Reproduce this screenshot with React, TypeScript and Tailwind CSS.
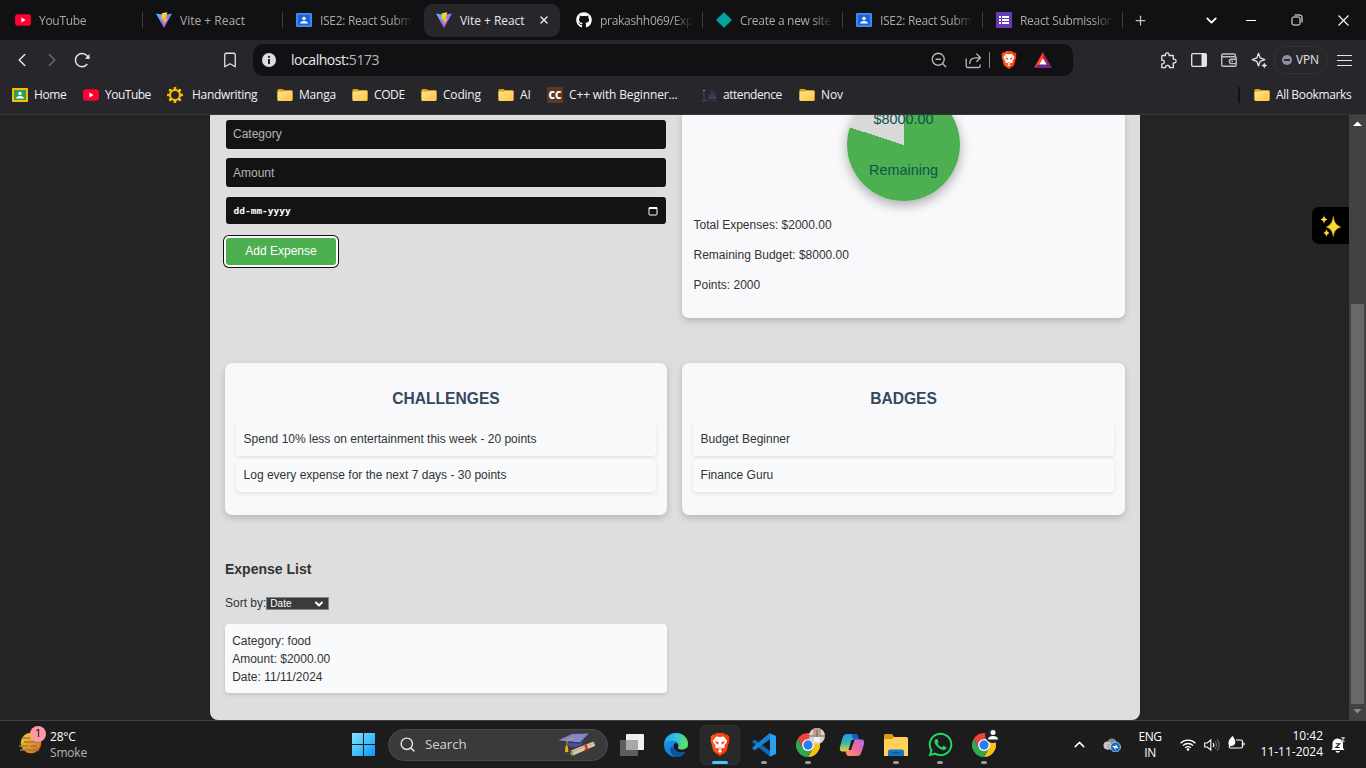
import React from "react";
import { FaGithub, FaWhatsapp } from "react-icons/fa";
import { ChevronLeft, ChevronRight, Bookmark, ChevronDown, ChevronUp, Plus, X, ZoomOut, Search } from "lucide-react";

const YouTubeIcon = () => (
  <svg width="16" height="16" viewBox="0 0 16 16" className="shrink-0">
    <rect x="0" y="2.2" width="16" height="11.6" rx="3" fill="#ff0033" />
    <path d="M6.4 5.6v4.8L10.6 8z" fill="#fff" />
  </svg>
);

const ViteIcon = () => (
  <svg width="16" height="16" viewBox="0 0 16 16" className="shrink-0">
    <defs>
      <linearGradient id="viteBase" x1="0" y1="0" x2="0.7" y2="1">
        <stop offset="0" stopColor="#41d1ff" />
        <stop offset="1" stopColor="#bd34fe" />
      </linearGradient>
      <linearGradient id="viteBolt" x1="0" y1="0" x2="0" y2="1">
        <stop offset="0" stopColor="#ffdd35" />
        <stop offset="1" stopColor="#ffa800" />
      </linearGradient>
    </defs>
    <path d="M0 1.6 8 3l8-1.4L8 16z" fill="url(#viteBase)" />
    <path d="M11.3.2 5.8 1.3l-.4 6 1.9-.3-.5 2.5 1.6-.4-1.1 4.6 4.5-7.2-2.2.3z" fill="url(#viteBolt)" />
  </svg>
);

const ClassroomIcon = ({ frame, board }: { frame: string; board: string }) => (
  <svg width="16" height="16" viewBox="0 0 16 16" className="shrink-0">
    <rect x="0" y="1" width="16" height="14" rx="1" fill={frame} />
    <rect x="2" y="3" width="12" height="10" fill={board} />
    <circle cx="8" cy="6.5" r="1.7" fill="#fff" />
    <path d="M4 11.6c0-1.8 2-2.7 4-2.7s4 .9 4 2.7z" fill="#fff" />
  </svg>
);

const DiamondIcon = () => (
  <svg width="16" height="16" viewBox="0 0 16 16" className="shrink-0">
    <path d="M8 .4 15.6 8 8 15.6.4 8z" fill="#05a3a0" stroke="#05a3a0" strokeLinejoin="round" strokeWidth=".6" />
  </svg>
);

const FormsIcon = () => (
  <svg width="16" height="16" viewBox="0 0 16 16" className="shrink-0">
    <rect width="16" height="16" rx="1" fill="#673ab7" />
    <path d="M3 4h2v2H3zM6 4h7v2H6zM3 7h2v2H3zM6 7h7v2H6zM3 10h2v2H3zM6 10h7v2H6z" fill="#fff" />
    <path d="M3 6h10v1H3zM3 9h10v1H3z" fill="#673ab7" />
  </svg>
);

const FolderIcon = () => (
  <svg width="16" height="16" viewBox="0 0 16 16" className="shrink-0">
    <defs>
      <linearGradient id="folder" x1="0" y1="0" x2="1" y2="1">
        <stop offset="0" stopColor="#ffe391" />
        <stop offset="1" stopColor="#fbc63d" />
      </linearGradient>
    </defs>
    <path d="M.5 3a1 1 0 0 1 1-1h4.200l1.500 1.300h7.300a1 1 0 0 1 1 1V13H.5z" fill="#dfa113" />
    <path d="M.5 4.500h5.700l1.200-.8h7.100a1 1 0 0 1 1 1V13a1 1 0 0 1-1 1h-13a1 1 0 0 1-1-1z" fill="url(#folder)" />
  </svg>
);

const GearIcon = () => (
  <svg width="18" height="18" viewBox="0 0 18 18" className="-ml-px shrink-0">
    <circle cx="9" cy="9" r="5" fill="none" stroke="#fbbc04" strokeWidth="2.200" />
    {[0, 45, 90, 135, 180, 225, 270, 315].map((a) => (
      <rect key={a} x="7.700" y="1" width="2.600" height="3" rx=".6" fill="#fbbc04" transform={`rotate(${a} 9 9)`} />
    ))}
  </svg>
);

const CodeChefIcon = () => (
  <span className="flex h-4 w-4 shrink-0 items-center justify-center bg-[#5b3824] font-['Open_Sans',sans-serif] text-[10px] font-extrabold leading-none tracking-normal text-white">
    CC
  </span>
);

const AttendIcon = () => (
  <svg width="16" height="16" viewBox="0 0 16 16" className="shrink-0">
    <path d="M0 15 2 12V5l1-2 1 3v6h2v3zM7 15l1-9 2 2V1l2 3 1 3 2-2v9l-2 1-1-4-1 4-2-4-1 4z" fill="#393253" />
    <path d="M2 3h2v1H2z" fill="#a99b9b" />
    <path d="M8 10h7v1H8z" fill="#52477a" />
  </svg>
);

const BraveIcon = ({ width, height }: { width: number; height: number }) => (
  <svg width={width} height={height} viewBox="0 0 20 24">
    <defs>
      <linearGradient id="brave" x1="0" y1="0" x2="1" y2="0">
        <stop offset="0" stopColor="#ff5a1f" />
        <stop offset="1" stopColor="#ff3300" />
      </linearGradient>
    </defs>
    <path d="M6 0h8l1.800 1.900 1.900-.3L20 4.200l-.7 2 .5 1.600-2.600 10c-.4 1.400-1.200 2.100-2.300 2.900L10 24l-4.900-3.300c-1.100-.8-1.900-1.500-2.300-2.900L.2 7.800l.5-1.600-.7-2 2.300-2.600 1.900.3z" fill="url(#brave)" />
    <path d="M6.200 3.700 10 4.300l3.800-.6 3.500 4.200-.4 2-2.200 3 .5 2-1.700 1.200-1-.6-2.500 2-2.500-2-1 .6-1.700-1.200.5-2-2.200-3-.4-2z" fill="#fff" />
    <path d="M4.500 8.500 8.300 9.300l.2 2.700-2-.9zM15.500 8.500l-3.800.8-.2 2.700 2-.9zM8 14.300l2 .8 2-.8-2 1.700z" fill="#ff4416" />
    <path d="m10 17.300 2.300 1.500L10 20.800l-2.300-2z" fill="#fff" />
  </svg>
);

const BatIcon = () => (
  <svg width="18" height="16" viewBox="0 0 18 16">
    <path d="M9 0 0 16l9-5.500z" fill="#ff4724" />
    <path d="M9 0l9 16-9-5.500z" fill="#9e1f63" />
    <path d="M0 16h18l-9-6z" fill="#662d91" />
    <path d="M9 6.300 5.300 12.500h7.400z" fill="#fff" />
  </svg>
);

const ReloadIcon = () => (
  <svg width="18" height="18" viewBox="0 0 18 18" fill="none" stroke="#e4e4e8" strokeWidth="1.500">
    <path d="M14.300 13A6.600 6.600 0 1 1 15.300 7" />
    <path d="M12 7.800 16.700 8l-.3-5z" fill="#e4e4e8" stroke="none" />
  </svg>
);

const ShareIcon = () => (
  <svg width="17" height="17" viewBox="0 0 17 17" fill="none" stroke="#b9b9bd" strokeWidth="1.300" strokeLinejoin="round" strokeLinecap="round">
    <path d="M1.200 7v7a1.500 1.500 0 0 0 1.500 1.500h11a1.500 1.500 0 0 0 1.500-1.500v-1" />
    <path d="M4.800 11.500c0-3.500 2.200-5.700 6-5.700h4.500M11.800 2l3.700 3.800-3.700 3.700" />
  </svg>
);

const PuzzleIcon = () => (
  <svg width="17" height="17" viewBox="0 0 17 17" fill="none" stroke="#e4e4e8" strokeWidth="1.300" strokeLinejoin="round">
    <path d="M2.500 3.500h3c-.4-1.500.3-2.600 1.700-2.600s2.200 1.100 1.800 2.600h4.300v3.800c1.600-.4 2.800.4 2.800 1.800s-1.200 2.200-2.800 1.800v4.800H9.500c.3-1.400-.5-2.400-1.900-2.400s-2.300 1-2 2.400H1.800v-3.800c1.500.3 2.500-.5 2.500-1.800s-1-2.100-2.500-1.800V4.200c0-.4.300-.7.7-.7z" />
  </svg>
);

const SidebarIcon = () => (
  <svg width="16" height="16" viewBox="0 0 16 16">
    <rect x=".7" y="1.700" width="14.600" height="12.600" rx="1" fill="none" stroke="#e4e4e8" strokeWidth="1.300" />
    <rect x="10.500" y="2" width="4.800" height="12" fill="#e4e4e8" />
  </svg>
);

const WalletIcon = () => (
  <svg width="16" height="16" viewBox="0 0 16 16" fill="none" stroke="#c0c0c4" strokeWidth="1.400" strokeLinejoin="round">
    <path d="M14.300 5V3.200a1.200 1.200 0 0 0-1.200-1.200H2.200a1.400 1.400 0 0 0-1.500 1.400c0 .8.600 1.300 1.500 1.300h11.500a1.500 1.500 0 0 1 1.500 1.500v6.600a1.500 1.500 0 0 1-1.500 1.500H2.200A1.500 1.500 0 0 1 .7 12.800V3.500" />
    <path d="M15.200 7.200h-4.700a2.200 2.200 0 0 0 0 4.400h4.700M10.300 9.400h1.700" />
  </svg>
);

const LeoIcon = () => (
  <svg width="17" height="17" viewBox="0 0 17 17" fill="none" stroke="#e4e4e8" strokeWidth="1.300" strokeLinejoin="round">
    <path d="M7.500 1.300 9.200 5.900 13.800 7.600 9.200 9.300 7.500 13.900 5.800 9.300 1.200 7.600 5.800 5.900z" />
    <path d="M13.300 10.400l.9 2.200 2.200.9-2.200.9-.9 2.200-.9-2.200-2.200-.9 2.200-.9z" fill="#e4e4e8" stroke="none" />
  </svg>
);

const VsCodeIcon = () => (
  <svg width="24" height="24" viewBox="0 0 24 24">
    <path d="M.6 8.200 2 7a1 1 0 0 1 1.300 0L18 18v5.300c-.5 0-.8-.2-1.100-.5L.6 9.600a1 1 0 0 1 0-1.400z" fill="#0b6db8" />
    <path d="M.6 15.800 2 17a1 1 0 0 0 1.300 0L18 6V.2c-.5 0-.8.2-1.100.5L.6 14.400a1 1 0 0 0 0 1.400z" fill="#1683d0" />
    <path d="M17.500.2 24 3v18l-6.500 2.900c.4-.2.500-.5.500-1V1.200c0-.5-.1-.8-.5-1z" fill="#2ba0f0" />
    <path d="M16.700.8c.3-.4.800-.6 1.300-.6V6l-6 4.500z" fill="#1683d0" />
  </svg>
);

const ChromeIcon = () => (
  <svg width="24" height="24" viewBox="0 0 48 48">
    <path d="M34.400 30 24 48A24 24 0 0 0 44.800 12H24z" fill="#fbc116" />
    <path d="M13.600 30 3.200 12A24 24 0 0 0 24 48l10.400-18z" fill="#2da94f" />
    <path d="M3.200 12A24 24 0 0 1 44.800 12H24a12 12 0 0 0-10.400 18z" fill="#e8453c" />
    <circle cx="24" cy="24" r="12" fill="#fff" />
    <circle cx="24" cy="24" r="9.300" fill="#2c7bf2" />
  </svg>
);

const EdgeIcon = () => (
  <svg width="24" height="24" viewBox="0 0 24 24">
    <defs>
      <linearGradient id="edgeTop" x1="0" y1="0" x2="1" y2=".4">
        <stop offset="0" stopColor="#1b95e8" />
        <stop offset=".5" stopColor="#2fc3e8" />
        <stop offset="1" stopColor="#5fe05a" />
      </linearGradient>
      <linearGradient id="edgeSide" x1="0" y1="0" x2=".6" y2="1">
        <stop offset="0" stopColor="#1f9be9" />
        <stop offset="1" stopColor="#1277d3" />
      </linearGradient>
    </defs>
    <circle cx="12" cy="12" r="12" fill="url(#edgeSide)" />
    <path d="M8.200 13c-.2 6 5.800 9 13.600 5.800A12 12 0 0 1 12 24C6 22 5 15 8.200 13z" fill="#0d4f9e" />
    <path d="M.2 10.500C1.500 4 6 0 12 0c7 0 12 5 12 10.500 0 4-3.500 6-6.500 6-2.800 0-4-1.300-3.500-2.300 1.300-1.500 1-5-2.500-6.200C7.500 6.800 1.700 7.500.2 10.500z" fill="url(#edgeTop)" />
    <path d="M9.500 12.300c0-1.500 1.500-2.500 2.700-2.300 2 .5 2.700 2.500 1.800 4.200-.5 1.300 1.300 2.600 4 2.500 2.500 0 4.500-1 6-2.200v3.500l-2.200 1.800c-5 1.800-12.300-1-12.300-7.500z" fill="#1c1c1c" />
    <path d="M9.500 12.300c-.5 4 4 7.500 9 7 1.200-.1 2.300-.6 2.900-.7A12 12 0 0 1 14 23.800C9 22 7 15 9.500 12.300z" fill="#0e559f" />
  </svg>
);

const CopilotIcon = () => (
  <svg width="26" height="24" viewBox="0 0 26 24">
    <defs>
      <linearGradient id="copA" x1="0" y1="0" x2="0" y2="1">
        <stop offset="0" stopColor="#1c9df0" />
        <stop offset=".5" stopColor="#38b6a4" />
        <stop offset="1" stopColor="#e8d230" />
      </linearGradient>
      <linearGradient id="copB" x1="1" y1="0" x2="0" y2="1">
        <stop offset="0" stopColor="#b06bf0" />
        <stop offset=".5" stopColor="#f06a9c" />
        <stop offset="1" stopColor="#ff9a52" />
      </linearGradient>
    </defs>
    <path d="M8 1h8c2 0 2.500 1 3 3l1 3h-5l-3 9c-.8 2-1.500 2.500-3.500 2.500H4c-3 0-3.500-2-3-4.500L3.500 5C4.500 2 5.500 1 8 1z" fill="url(#copA)" />
    <path d="M12 1h4c2 0 2.500 1 3 3l1 3h-5c-1.500 0-1.500-6-3-6z" fill="#2056c4" />
    <path d="M18 23h-8c-2 0-2.500-1-3-3l-1-2.500h5l3-8.500c.8-2 1.500-2.500 3.500-2.500H22c3 0 3.500 2 3 4.500L22.500 19c-1 3-2 4-4.500 4z" fill="url(#copB)" />
    <path d="M12.500 7h3l-3.500 10H9.500z" fill="#1c1c1c" />
  </svg>
);

const ExplorerIcon = () => (
  <svg width="24" height="22" viewBox="0 0 24 22">
    <path d="M0 1.500A1.500 1.500 0 0 1 1.500 0H8l2 2.500V7H0z" fill="#dc9a0c" />
    <path d="M0 5h8l2-2h12.500A1.500 1.500 0 0 1 24 4.500V22H0z" fill="#ffd05a" />
    <path d="M4 22v-4.500a2 2 0 0 1 2-2h12a2 2 0 0 1 2 2V22z" fill="#1476c6" />
    <path d="M8 18h8v1.500H8z" fill="#0c5ba0" />
  </svg>
);

const TaskViewIcon = () => (
  <svg width="24" height="22" viewBox="0 0 24 22">
    <rect x="6" y="0" width="18" height="16" rx="1" fill="#efefef" />
    <rect x="0" y="6" width="18" height="16" rx="1" fill="#5e5e5e" />
    <rect x="6" y="6" width="12" height="10" fill="#a8a8a8" />
  </svg>
);

const GraduationArt = () => (
  <svg width="38" height="24" viewBox="0 0 38 24">
    <path d="M10 8v4c2 3 11 3 14-1l2-6z" fill="#4b5299" />
    <path d="M0 7.500 14 1 31 .5 22 9.500z" fill="#7f88c9" />
    <path d="M0 7.500 22 9.500 31 .5l.3 1L22 10.800 0 8.500z" fill="#2f3566" />
    <path d="M16 5 9 7.500 8.500 17" fill="none" stroke="#e0a126" strokeWidth="1" />
    <path d="M7.500 13h2.200l.8 6-3.500.2z" fill="#edae24" />
    <path d="M13 17.500 35.500 8.500l1.800 4.200L15 22.500z" fill="#d9cbaa" />
    <path d="M13 19.500 36.500 10" stroke="#a79872" strokeWidth=".7" />
    <ellipse cx="14" cy="20" rx="1.500" ry="2.600" fill="#a8946c" />
    <path d="M26 11.500 28.500 11l1.500 5-2 .8zM26 17l3-3 3 3-3-.5-1 2z" fill="#cf3034" />
  </svg>
);

const SmokeIcon = () => (
  <svg width="28" height="28" viewBox="0 0 28 28">
    <defs>
      <linearGradient id="smokeSun" x1="0" y1="0" x2=".8" y2="1">
        <stop offset="0" stopColor="#ffd51f" />
        <stop offset="1" stopColor="#e56a00" />
      </linearGradient>
    </defs>
    <circle cx="12" cy="16" r="10.300" fill="url(#smokeSun)" />
    <path d="M3 11h8M5 15h17M0 19h9M11 19h7M1 23h19" stroke="#827c73" strokeWidth="1.700" />
  </svg>
);

const SparklesIcon = () => (
  <svg width="22" height="22" viewBox="0 0 22 22">
    <path d="M13.300 1.500C14.200 7 15.500 9.800 20.800 12c-5.300 1.800-6.600 4.200-7.500 9.500-.9-5.300-2.200-7.700-7-9.500 4.800-2.200 6.100-5 7-10.500z" fill="#fdd835" stroke="#f4b400" strokeWidth=".5" />
    <path d="M4 0c.4 2.600 1.200 3.700 3.500 4.500C5.200 5.300 4.400 6.400 4 9c-.4-2.600-1.200-3.700-3.500-4.500C2.800 3.700 3.600 2.600 4 0zM6.500 14c.4 2.300 1.100 3.200 3.100 4-2 .8-2.700 1.700-3.100 4-.4-2.300-1.100-3.200-3.100-4 2-.8 2.700-1.700 3.100-4z" fill="#fdd835" />
  </svg>
);

type TabInfo = { icon: React.ReactNode; title: string; sep?: boolean; active?: boolean };
const blueClass = <ClassroomIcon frame="#4285f4" board="#1f62d6" />;
const tabs: TabInfo[] = [
  { icon: <YouTubeIcon />, title: "YouTube", sep: true },
  { icon: <ViteIcon />, title: "Vite + React", sep: true },
  { icon: blueClass, title: "ISE2: React Subm" },
  { icon: <ViteIcon />, title: "Vite + React", active: true },
  { icon: <FaGithub size={16} color="#fff" className="shrink-0" />, title: "prakashh069/Exp", sep: true },
  { icon: <DiamondIcon />, title: "Create a new site", sep: true },
  { icon: blueClass, title: "ISE2: React Subm", sep: true },
  { icon: <FormsIcon />, title: "React Submission", sep: true },
];

const bookmarks = [
  { icon: <ClassroomIcon frame="#fbbc04" board="#2f9e58" />, label: "Home", w: "w-[71px]", track: "tracking-[-0.4px]" },
  { icon: <YouTubeIcon />, label: "YouTube", w: "w-[84px]", track: "tracking-[-0.5px]" },
  { icon: <GearIcon />, label: "Handwriting", w: "w-[110px]", track: "ml-0.5 tracking-[-0.3px]" },
  { icon: <FolderIcon />, label: "Manga", w: "w-[75px]", track: "tracking-[-0.2px]" },
  { icon: <FolderIcon />, label: "CODE", w: "w-[69px]", track: "tracking-[-0.4px]" },
  { icon: <FolderIcon />, label: "Coding", w: "w-[77px]", track: "tracking-[-0.2px]" },
  { icon: <FolderIcon />, label: "AI", w: "w-[49px]", track: "tracking-[-0.2px]" },
  { icon: <CodeChefIcon />, label: "C++ with Beginner...", w: "w-[154px]", track: "tracking-[-0.14px]" },
  { icon: <AttendIcon />, label: "attendence", w: "w-[98px]", track: "tracking-[-0.45px]" },
  { icon: <FolderIcon />, label: "Nov", w: "w-[60px]", track: "tracking-[-0.1px]" },
];

function TabStrip() {
  return (
    <div className="flex h-10 items-center bg-[#111113] pl-[3px] text-[12px] tracking-[-0.3px]">
      {tabs.map((t, i) => (
        <div key={i} className="flex h-10 w-[140px] shrink-0 items-center">
          <div
            className={
              t.active
                ? "ml-px flex h-[33px] w-[136px] items-center rounded-[9px] bg-[#27272b] pl-3 text-[#e6e6ea]"
                : i === 0
                  ? "flex h-[33px] w-[139px] items-center pl-3 text-[#a9a9ad]"
                  : "flex h-[33px] w-[139px] items-center pl-[13px] text-[#a9a9ad]"
            }
          >
            {t.icon}
            <span
              className={
                t.active
                  ? "ml-2 w-[76px] whitespace-nowrap pt-px tracking-[-0.05px]"
                  : i === 1
                    ? "ml-2 w-[96px] whitespace-nowrap pt-px tracking-[0px]"
                    : "ml-2 w-[96px] whitespace-nowrap pt-px [mask-image:linear-gradient(to_right,#000_76%,transparent_97%)]"
              }
            >
              {t.title}
            </span>
            {t.active && <X size={12} strokeWidth={3} className="ml-[2px]" />}
          </div>
          {t.sep && <div className="h-4 w-px bg-[#3b3b40]" />}
        </div>
      ))}
      <div className="flex w-9 shrink-0 justify-center pr-[2px] text-[#c4c4c8]">
        <Plus size={15} strokeWidth={2} />
      </div>
      <div className="ml-9 flex text-white">
        <div className="flex w-8 items-center justify-center"><ChevronDown size={17} strokeWidth={2.500} /></div>
        <div className="flex w-[46px] items-center justify-center pl-[2px]"><div className="h-px w-[10px] bg-white" /></div>
        <div className="flex w-[46px] items-center justify-center pl-px">
          <svg width="12" height="12" viewBox="0 0 12 12" fill="none" stroke="#fff">
            <rect x="1" y="3" width="8" height="8" rx="1.500" />
            <path d="M3.500 1h5.500a2 2 0 0 1 2 2v5.500" />
          </svg>
        </div>
        <div className="flex w-[46px] items-center justify-center pl-[2px]">
          <svg width="11" height="11" viewBox="0 0 11 11" stroke="#fff" strokeWidth="1.100"><path d="M.5.5l10 10M10.500.5l-10 10" /></svg>
        </div>
      </div>
    </div>
  );
}

function Toolbar() {
  return (
    <div className="flex h-9 items-end bg-[#27272b]">
      <div className="flex h-8 w-[253px] shrink-0 items-center text-[#e4e4e8]">
        <ChevronLeft size={22} strokeWidth={1.700} className="ml-[11px]" />
        <ChevronRight size={22} strokeWidth={1.700} className="ml-[8px] text-[#6a6a6f]" />
        <span className="ml-[10px]"><ReloadIcon /></span>
        <Bookmark size={18} strokeWidth={1.700} className="ml-[130px]" />
      </div>
      <div className="flex h-8 w-[820px] shrink-0 items-center rounded-[10px] bg-[#111113]">
        <span className="ml-[9px] flex h-[14px] w-[14px] items-center justify-center rounded-full bg-[#dcdce0]">
          <svg width="4" height="8" viewBox="0 0 4 8" fill="#222"><path d="M1 0h2v1.800H1zM1 3h2v5H1z" /></svg>
        </span>
        <span className="ml-[15px] pb-px text-[14px] tracking-[-0.45px] text-[#e8e8ec]">
          localhost:<span className="text-[#b8b8bc]">5173</span>
        </span>
        <div className="ml-auto flex items-center pr-[21px]">
          <ZoomOut size={18} strokeWidth={1.700} color="#b9b9bd" />
          <span className="ml-[17px]"><ShareIcon /></span>
          <div className="ml-[7px] h-4 w-px bg-[#8a8a8e]" />
          <span className="ml-[11px]"><BraveIcon width={16} height={18} /></span>
          <span className="ml-[17px]"><BatIcon /></span>
        </div>
      </div>
      <div className="ml-auto flex h-8 items-center pr-[14px]">
        <span className="mr-[14px]"><PuzzleIcon /></span>
        <span className="mr-[14px]"><SidebarIcon /></span>
        <span className="mr-[14px]"><WalletIcon /></span>
        <span className="mr-[6px]"><LeoIcon /></span>
        <div className="mr-[10px] flex h-[28px] w-[53px] items-center justify-center gap-[4px] rounded-[10px] border border-[#313136] text-[12px] tracking-[-0.2px] text-[#e4e4e8]">
          <span className="flex h-[10px] w-[10px] items-center justify-center rounded-full bg-[#8f8fa5]"><span className="h-[2px] w-[6px] bg-[#2b2b33]" /></span>
          VPN
        </div>
        <div className="flex w-[15px] flex-col gap-1">
          <div className="h-px bg-[#e4e4e8]" />
          <div className="h-px bg-[#e4e4e8]" />
          <div className="h-px bg-[#e4e4e8]" />
        </div>
      </div>
    </div>
  );
}

function BookmarkBar() {
  return (
    <div className="flex h-[39px] items-center border-b border-[#36363b] bg-[#27272b] pl-3 text-[12px] tracking-[-0.2px] text-[#f0f0f2]">
      {bookmarks.map((b) => (
        <div key={b.label} className={`flex shrink-0 items-center gap-1.5 whitespace-nowrap ${b.w}`}>
          {b.icon}
          <span className={b.track}>{b.label}</span>
        </div>
      ))}
      <div className="ml-auto h-4 w-[2px] bg-[#121214]" />
      <div className="ml-[14px] flex w-[112px] items-center whitespace-nowrap tracking-[-0.35px]">
        <FolderIcon />
        <span className="ml-1.5">All Bookmarks</span>
      </div>
    </div>
  );
}

function ListCard({ title, items }: { title: string; items: string[] }) {
  return (
    <section className="h-[152px] rounded-[7px] bg-[#f9f9fb] px-[11px] pt-[25px] shadow-[0_3px_7px_rgba(0,0,0,0.18)]">
      <h2 className="mb-[12px] text-center text-[15.6px] font-bold leading-[22px] text-[#34495e]">{title}</h2>
      <ul className="flex flex-col gap-[3px]">
        {items.map((t) => (
          <li key={t} className="rounded-[4px] bg-[#f8fafc] px-[7.600px] pb-[8px] pt-[7px] text-[12px] leading-[18px] shadow-[0_2px_4px_rgba(0,0,0,0.09)] first:pt-[8px] last:pb-[8px]">
            {t}
          </li>
        ))}
      </ul>
    </section>
  );
}

function Page() {
  return (
    <div className="flex h-[605px] bg-[#242424] font-['Liberation_Sans',Arial,sans-serif] text-[12px] text-[#333]">
      <div className="ml-[210px] flex h-[605px] w-[930px] flex-col rounded-b-[8px] bg-[#dedede] px-[15px]">
        <div className="grid grid-cols-[442px_443px] gap-x-[15px]">
          <div className="flex flex-col px-px pt-[5px]">
            <div className="h-[29px] rounded-[3px] bg-[#131313] px-[7px] leading-[28px] text-[#b5b5b5]">Category</div>
            <div className="mt-[9px] h-[29px] rounded-[3px] bg-[#131313] px-[7px] leading-[30px] text-[#b5b5b5]">Amount</div>
            <div className="mt-[10px] flex h-[27px] items-center justify-between rounded-[3px] bg-[#131313] px-[7.500px] font-['DejaVu_Sans_Mono',monospace] text-[9.500px] font-bold text-white">
              <span className="pt-px">dd-mm-yyyy</span>
              <svg width="10" height="10" viewBox="0 0 10 10" className="mr-[1px]" fill="none" stroke="#fff">
                <rect x="1" y="1.500" width="8" height="7.500" rx=".8" />
                <path d="M1 2h8" strokeWidth="2" />
              </svg>
            </div>
            <button className="mt-[14px] h-[27px] w-[110px] rounded-[3px] bg-[#4caf50] pb-px text-[12px] font-medium text-white shadow-[0_0_0_2px_#fff,0_0_0_3px_#101010]">Add Expense</button>
          </div>
          <section className="flex h-[203px] flex-col items-center overflow-visible rounded-b-[7px] bg-[#f9f9fb] shadow-[0_3px_7px_rgba(0,0,0,0.18)]">
            <div className="-mt-[27px] flex h-[113px] w-[113px] flex-col items-center rounded-full bg-[conic-gradient(at_57px_57px,#4caf50_0_80%,#d9d9d9_80%)] pt-5 text-[14.400px] text-[#0d544c] shadow-[0_4px_12px_rgba(0,0,0,0.32)]">
              <span className="leading-[22px]">$8000.00</span>
              <span className="mt-[29px] leading-[22px]">Remaining</span>
            </div>
            <div className="mt-[15px] flex w-full flex-col gap-3 pl-[11.500px] leading-[18px]">
              <p>Total Expenses: $2000.00</p>
              <p>Remaining Budget: $8000.00</p>
              <p>Points: 2000</p>
            </div>
          </section>
        </div>
        <div className="mt-[45px] grid grid-cols-[442px_443px] gap-x-[15px]">
          <ListCard title="CHALLENGES" items={["Spend 10% less on entertainment this week - 20 points", "Log every expense for the next 7 days - 30 points"]} />
          <ListCard title="BADGES" items={["Budget Beginner", "Finance Guru"]} />
        </div>
        <h3 className="mt-[43px] text-[14px] font-bold leading-[22px]">Expense List</h3>
        <div className="mt-[14px] flex h-[18px] items-center">
          Sort by:
          <span className="mt-px flex h-[13px] w-[63px] items-center justify-between border border-[#858585] bg-[#3b3b3b] pl-[3px] pr-[3px] text-[10px] leading-none text-white">
            Date
            <ChevronDown size={12} strokeWidth={4} />
          </span>
        </div>
        <div className="mt-[12px] h-[69px] w-[442px] rounded-[4px] bg-[#f8fafc] px-[7.200px] pt-[8px] leading-[18px] shadow-[0_2px_4px_rgba(0,0,0,0.12)]">
          <p>Category: food</p>
          <p>Amount: $2000.00</p>
          <p>Date: 11/11/2024</p>
        </div>
      </div>
      <div className="ml-auto mt-[92px] flex h-[37px] w-[37px] items-center justify-center rounded-l-[7px] bg-black">
        <SparklesIcon />
      </div>
      <div className="flex h-[605px] w-[17px] flex-col items-center bg-[#424242]">
        <svg width="17" height="17" viewBox="0 0 17 17"><path d="M8.500 6.500 13 11H4z" fill="#fff" /></svg>
        <div className="mt-[172px] h-[400px] w-[13px] bg-[#686868]" />
        <svg width="17" height="16" viewBox="0 0 17 16"><path d="M8.500 9.500 4.500 5h8z" fill="#8a8a8a" /></svg>
      </div>
    </div>
  );
}

function AppCell({ children, mark, active }: { children: React.ReactNode; mark?: boolean; active?: boolean }) {
  return (
    <div className="flex w-11 shrink-0 justify-center">
      <div className={`relative flex h-10 w-10 items-center justify-center rounded-[5px] ${active ? "border border-[#303030] bg-[#292929]" : ""}`}>
        {children}
        {active && <div className="absolute bottom-0 h-[3px] w-4 rounded-full bg-[#4cc2ff]" />}
        {mark && <div className="absolute bottom-px h-[3px] w-[6px] rounded-full bg-[#9a9a9a]" />}
      </div>
    </div>
  );
}

function Taskbar() {
  return (
    <div className="flex h-12 items-center border-t border-[#3f3f3f] bg-[#1c1c1c] text-[12px] tracking-[-0.2px] text-white">
      <div className="flex w-[352px] shrink-0 items-center pl-[19px]">
        <div className="relative -mt-2">
          <SmokeIcon />
          <span className="absolute -top-[1px] left-[11px] flex h-4 w-4 items-center justify-center rounded-full bg-[#ff99a4] text-[11px] text-black">1</span>
        </div>
        <div className="ml-[3px] leading-4">
          <div>28°C</div>
          <div className="text-[#b5b5b5]">Smoke</div>
        </div>
      </div>
      <svg width="23" height="23" viewBox="0 0 23 23" className="shrink-0">
        <defs>
          <linearGradient id="winLogo" gradientUnits="userSpaceOnUse" x1="0" y1="0" x2="23" y2="23">
            <stop offset="0" stopColor="#8ae0ff" />
            <stop offset=".5" stopColor="#41c3fb" />
            <stop offset="1" stopColor="#0d93f7" />
          </linearGradient>
        </defs>
        <path d="M0 0h11v11H0zM12 0h11v11H12zM0 12h11v11H0zM12 12h11v11H12z" fill="url(#winLogo)" />
      </svg>
      <div className="ml-[13px] flex h-8 w-[220px] shrink-0 items-center rounded-full border border-[#4b4b4b] bg-[#3a3a3a] pl-[10px] pr-[11px] text-[13.300px] tracking-[-0.1px] text-[#d2d2d2]">
        <Search size={17} strokeWidth={2} color="#e6e6e6" />
        <span className="ml-[9px]">Search</span>
        <span className="ml-auto"><GraduationArt /></span>
      </div>
      <div className="ml-[2px] flex">
        <AppCell><TaskViewIcon /></AppCell>
        <AppCell><EdgeIcon /></AppCell>
        <AppCell active><BraveIcon width={20} height={23} /></AppCell>
        <AppCell mark><VsCodeIcon /></AppCell>
        <AppCell mark>
          <ChromeIcon />
          <svg width="16" height="16" viewBox="0 0 16 16" className="absolute left-[21px] top-[3px]">
            <circle cx="8" cy="8" r="8" fill="#ddd4cd" />
            <path d="M4 1.200a8 8 0 0 1 8 0v6H4z" fill="#c79a80" />
            <path d="M5 9h6v5H5z" fill="#f4f2f0" />
            <path d="M0 8h16M8 2v7" stroke="#6b6565" strokeWidth="1" />
          </svg>
        </AppCell>
        <AppCell><CopilotIcon /></AppCell>
        <AppCell mark><ExplorerIcon /></AppCell>
        <AppCell mark><FaWhatsapp size={27} color="#25d366" /></AppCell>
        <AppCell mark>
          <ChromeIcon />
          <svg width="16" height="16" viewBox="0 0 16 16" className="absolute left-[21px] top-[2px]">
            <circle cx="8" cy="8" r="8" fill="#202124" />
            <circle cx="8" cy="5.500" r="2.500" fill="#fff" />
            <path d="M3 12.500c0-2.500 2.500-3.500 5-3.500s5 1 5 3.500z" fill="#fff" />
          </svg>
        </AppCell>
      </div>
      <div className="ml-auto flex shrink-0 items-center pr-5">
        <ChevronUp size={17} strokeWidth={2} />
        <svg width="18" height="14" viewBox="0 0 18 14" className="ml-[15px]">
          <circle cx="9" cy="5" r="4.500" fill="#8a8a8a" />
          <circle cx="4.500" cy="7.500" r="4" fill="#c5c5c5" />
          <path d="M4 6h8v5.500H4z" fill="#b5b5b5" />
          <circle cx="12.500" cy="9" r="5" fill="#0f6cbd" stroke="#fff" strokeWidth=".6" />
          <path d="M9.700 8.500h4.300l-1.500-1.700M15.300 9.700H11l1.500 1.700" fill="none" stroke="#fff" />
        </svg>
        <div className="ml-4 w-[26px] text-center leading-4 tracking-[-0.400px]">ENG<br />IN</div>
        <svg width="16" height="13" viewBox="0 0 16 13" className="ml-[17px]" fill="none" stroke="#fff" strokeWidth="1.300">
          <path d="M.6 5.200a10.500 10.500 0 0 1 14.800 0M2.900 7.600a7.300 7.300 0 0 1 10.200 0M5.200 9.900a4 4 0 0 1 5.600 0" />
          <circle cx="8" cy="11.500" r="1.300" fill="#fff" stroke="none" />
        </svg>
        <svg width="16" height="14" viewBox="0 0 16 14" className="ml-2" fill="none" stroke="#fff" strokeWidth="1.100">
          <path d="M.7 5v4h2.500L6.800 12V2L3.200 5z" />
          <path d="M9 5a3 3 0 0 1 0 4" />
          <path d="M11 3.200a5.500 5.500 0 0 1 0 7.600M13 1.500a8 8 0 0 1 0 11" stroke="#666" />
        </svg>
        <svg width="17" height="14" viewBox="0 0 17 14" className="ml-2 -mt-1" fill="none" stroke="#fff" strokeWidth="1.200">
          <path d="M8 4h5a1.500 1.500 0 0 1 1.500 1.500v5a1.500 1.500 0 0 1-1.500 1.500H1.500M16 6.800v2.500" />
          <path d="M.8 9C-.5 5 2 2.500 4.500 0c3 3.500 4 7.500 1 9.500-1.500.5-2 .5-3 .2l-1 2.300H.8z" fill="#fff" stroke="none" />
        </svg>
        <div className="-mt-px ml-3 w-[66px] whitespace-nowrap text-right leading-4 tracking-[-0.02px]">10:42<br />11-11-2024</div>
        <svg width="15" height="16" viewBox="0 0 15 16" className="ml-2" fill="#fff">
          <path d="M1.500 11V6.500A5 5 0 0 1 9 2.200h1.500L12 6v5l1.500 2h-13zM4.500 14h4.500a2.300 2.300 0 0 1-4.500 0z" />
          <path d="M4.800 6.800h3.900l-3.900 3.700h3.900" fill="none" stroke="#1c1c1c" strokeWidth="1.100" />
          <path d="M9.500 0h5.500v5h-4.500z" fill="#1c1c1c" />
          <path d="M10.300.8h3.200L10.300 4.200h3.200" fill="none" stroke="#fff" />
        </svg>
      </div>
    </div>
  );
}

export default function App() {
  return (
    <div className="h-[768px] w-[1366px] overflow-hidden bg-[#1c1c1c] font-['Open_Sans','Noto_Sans',sans-serif]">
      <div className="relative z-10">
        <TabStrip />
        <Toolbar />
        <BookmarkBar />
      </div>
      <Page />
      <Taskbar />
    </div>
  );
}
